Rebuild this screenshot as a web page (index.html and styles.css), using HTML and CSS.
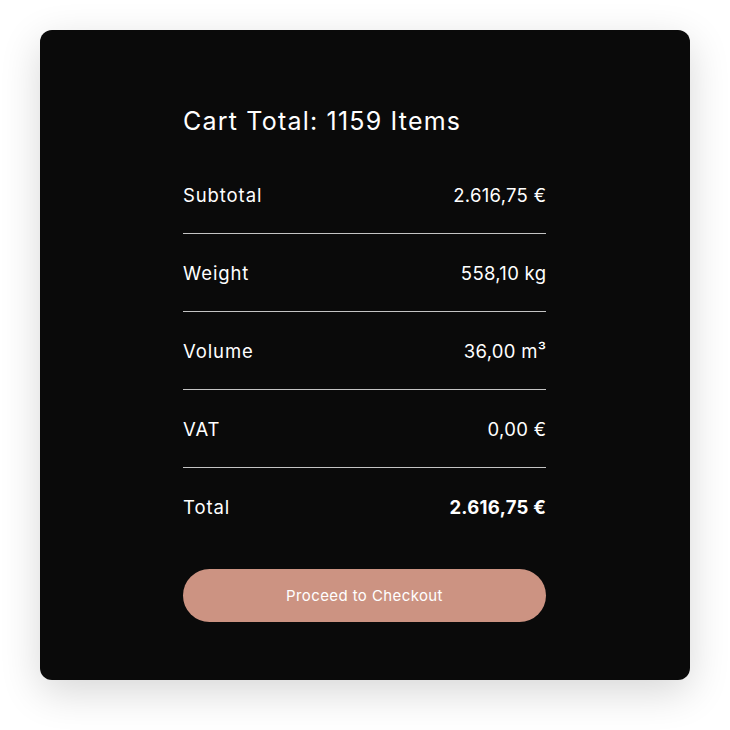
FILE: index.html
```html
<!DOCTYPE html>
<html>
<head>
<meta charset="utf-8">
<link rel="stylesheet" href="styles.css">
</head>
<body>
<div class="card">
  <h1 class="title">Cart Total: 1159 Items</h1>
  <div class="rows">
    <div class="row"><span class="label">Subtotal</span><span class="value">2.616,75 €</span></div>
    <div class="row"><span class="label">Weight</span><span class="value">558,10 kg</span></div>
    <div class="row"><span class="label">Volume</span><span class="value">36,00 m³</span></div>
    <div class="row"><span class="label">VAT</span><span class="value">0,00 €</span></div>
    <div class="row total"><span class="label">Total</span><span class="value strong">2.616,75 €</span></div>
  </div>
  <button class="checkout">Proceed to Checkout</button>
</div>
</body>
</html>
```
FILE: styles.css
```css
* { box-sizing: border-box; }
html, body { margin: 0; background: #fff; }
body {
  font-family: "Inter", "Open Sans", sans-serif;
  padding: 30px 40px 50px 40px;
}
.card {
  width: 650px;
  height: 650px;
  background: #0a0a0a;
  border-radius: 12px;
  box-shadow: 0 12px 40px rgba(0,0,0,0.16);
  padding: 75px 144px 58px 143px;
  color: #fff;
  display: flex;
  flex-direction: column;
}
.title {
  margin: 0;
  font-size: 25px;
  font-weight: 400;
  line-height: 32px;
  letter-spacing: 1.2px;
}
.rows {
  margin-top: 19px;
  display: flex;
  flex-direction: column;
  flex-shrink: 0;
}
.row {
  height: 78px;
  display: flex;
  justify-content: space-between;
  align-items: center;
  font-size: 18.5px;
  border-bottom: 1px solid #c4c4c4;
}
.label { letter-spacing: 0.9px; }
.value { letter-spacing: 0.3px; margin-right: -0.3px; }
.row.total { border-bottom: none; height: 77px; }
.strong { font-weight: 700; }
.checkout {
  margin-top: 24px;
  height: 53px;
  flex-shrink: 0;
  border: none;
  border-radius: 27px;
  background: #cc9382;
  color: #fff;
  font-family: inherit;
  font-size: 15px;
  letter-spacing: 0.4px;
  width: 100%;
}
```
